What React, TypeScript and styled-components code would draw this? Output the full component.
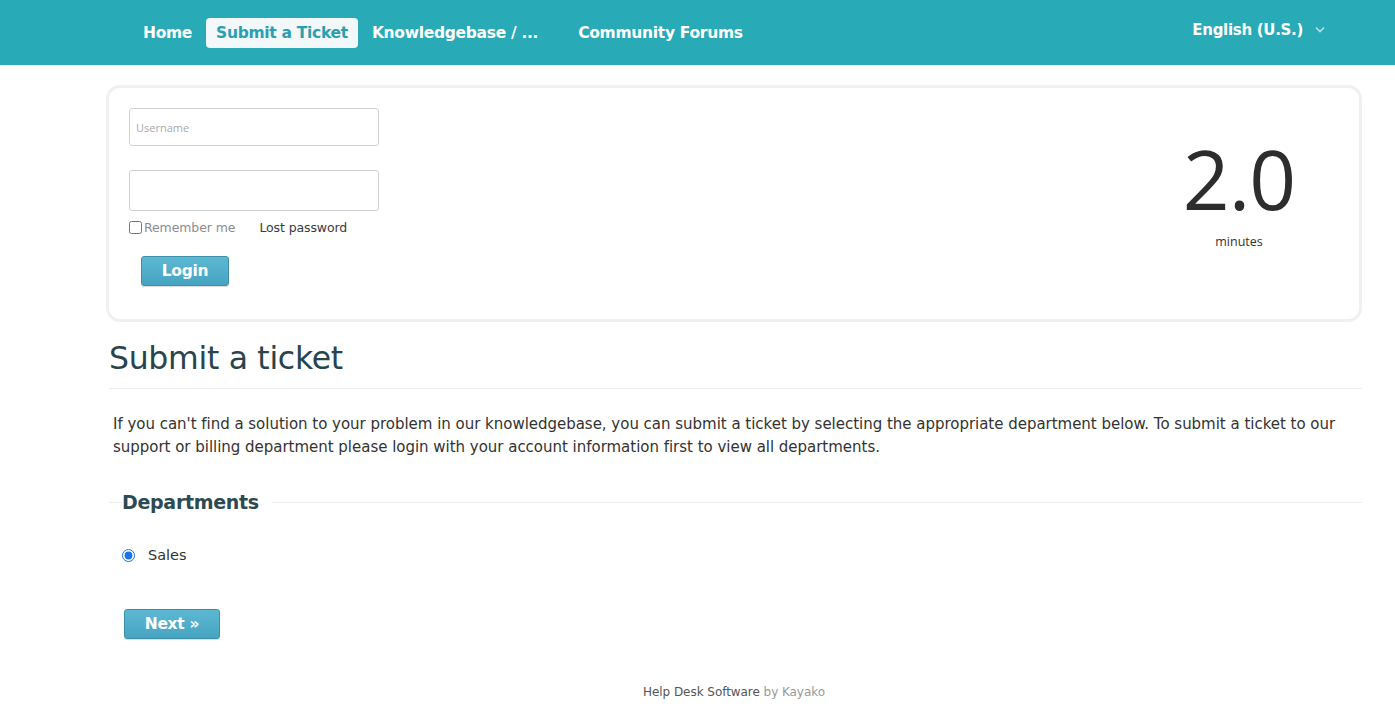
import styled, { createGlobalStyle } from "styled-components";

const GlobalStyle = createGlobalStyle`
  html, body {
    margin: 0;
    padding: 0;
    background: #ffffff;
    font-family: "DejaVu Sans", "Noto Sans", sans-serif;
  }
`;

const TopBar = styled.header`
  height: 65px;
  background: #28aab7;
  display: flex;
  align-items: center;
  padding: 0 70px 0 143px;
  box-sizing: border-box;
`;

const Nav = styled.nav`
  display: flex;
  align-items: center;
  gap: 4px;
  flex: 1;
`;

const NavLink = styled.a<{ active?: boolean; gapAfter?: number }>`
  display: inline-flex;
  align-items: center;
  height: 30px;
  padding: 0 10px;
  margin-right: ${({ gapAfter }) => gapAfter ?? 0}px;
  border-radius: 4px;
  font-size: 15.5px;
  font-weight: 700;
  letter-spacing: -0.3px;
  color: ${({ active }) => (active ? "#2a9fb0" : "#ffffff")};
  background: ${({ active }) => (active ? "#f3f8fa" : "transparent")};
  text-decoration: none;
  &:first-child {
    padding-left: 0;
  }
`;

const Lang = styled.div`
  display: flex;
  align-items: center;
  gap: 12px;
  color: #ffffff;
  font-size: 15px;
  font-weight: 700;
  letter-spacing: -0.3px;
  margin-top: -6px;
`;

const Page = styled.main`
  margin: 20px 33px 0 106px;
`;

const LoginCard = styled.section`
  border: 3px solid #eef0f2;
  border-radius: 14px;
  height: 237px;
  box-sizing: border-box;
  display: flex;
  justify-content: space-between;
  padding: 20px 0 0 20px;
`;

const LoginForm = styled.form`
  width: 250px;
  display: flex;
  flex-direction: column;
`;

const Field = styled.input<{ tall?: boolean }>`
  width: 250px;
  height: ${({ tall }) => (tall ? 41 : 38)}px;
  box-sizing: border-box;
  border: 1px solid #cfd2d4;
  border-radius: 3px;
  padding: 0 6px;
  font-family: "Open Sans", sans-serif;
  font-size: 11px;
  margin-bottom: ${({ tall }) => (tall ? 6 : 24)}px;
  &::placeholder {
    color: #a9a9a9;
  }
`;

const OptionsRow = styled.div`
  display: flex;
  align-items: center;
  margin-top: 3px;
  font-size: 12.5px;
  letter-spacing: -0.1px;
`;

const Check = styled.input`
  margin: 0 2px 0 0;
  width: 13px;
  height: 13px;
`;

const Muted = styled.span`
  color: #8c8c8c;
  margin-right: 24px;
`;

const Dark = styled.span`
  color: #3a3a3a;
`;

const TealButton = styled.button<{ w: number }>`
  width: ${({ w }) => w}px;
  height: 30px;
  border: 1px solid #3b8fa8;
  border-radius: 3px;
  background: linear-gradient(#5cb8d2, #47a4c1);
  color: #ffffff;
  font-family: "DejaVu Sans", sans-serif;
  font-size: 15.5px;
  font-weight: 700;
  letter-spacing: -0.3px;
  cursor: pointer;
  box-shadow: 0 1px 1px rgba(0, 0, 0, 0.15);
`;

const LoginWrap = styled.div`
  margin: 21px 0 0 12px;
`;

const Timer = styled.div`
  width: 244px;
  display: flex;
  flex-direction: column;
  align-items: center;
  margin-top: 28px;
  font-family: "Open Sans", sans-serif;
  color: #2d2d2f;
`;

const BigNumber = styled.div`
  font-size: 82px;
  line-height: 1;
  letter-spacing: -1px;
  margin-left: 4px;
  margin-top: 1px;
`;

const Unit = styled.div`
  font-size: 12.5px;
  margin-top: 14px;
  margin-left: 4px;
  color: #333;
`;

const Title = styled.h1`
  margin: 18px 0 0 3px;
  padding-bottom: 12px;
  border-bottom: 1px solid #eceeef;
  font-size: 31.5px;
  font-weight: 500;
  letter-spacing: -0.3px;
  color: #28444c;
`;

const Intro = styled.p`
  margin: 24px 0 0 7px;
  font-size: 15px;
  line-height: 23px;
  letter-spacing: -0.02px;
  color: #333;
`;

const Fieldset = styled.fieldset`
  border: none;
  border-top: 1px solid #eceeef;
  margin: 32px 0 0 3px;
  padding: 0 0 0 13px;
`;

const Legend = styled.legend`
  padding: 0 13px 0 0;
  font-size: 19px;
  font-weight: 700;
  letter-spacing: -0.3px;
  color: #2d4a52;
`;

const RadioRow = styled.label`
  display: flex;
  align-items: center;
  gap: 13px;
  margin-top: 34px;
  font-size: 14.5px;
  color: #333;
`;

const Radio = styled.input`
  margin: 0;
  width: 13px;
  height: 13px;
  accent-color: #1a73e8;
`;

const NextWrap = styled.div`
  margin: 46px 0 0 2px;
`;

const Footer = styled.footer`
  text-align: center;
  margin-top: 46px;
  font-size: 12px;
  color: #555;
  letter-spacing: -0.05px;
`;

const Faint = styled.span`
  color: #999;
`;

const Chevron = () => (
  <svg width="10" height="7" viewBox="0 0 10 7" fill="none">
    <path d="M1 1.5l4 4 4-4" stroke="#b9e2e7" strokeWidth="1.6" />
  </svg>
);

export default function App() {
  return (
    <>
      <GlobalStyle />
      <TopBar>
        <Nav>
          <NavLink href="#">Home</NavLink>
          <NavLink href="#" active>
            Submit a Ticket
          </NavLink>
          <NavLink href="#" gapAfter={16}>
            Knowledgebase / ...
          </NavLink>
          <NavLink href="#">Community Forums</NavLink>
        </Nav>
        <Lang>
          English (U.S.)
          <Chevron />
        </Lang>
      </TopBar>
      <Page>
        <LoginCard>
          <LoginForm>
            <Field placeholder="Username" />
            <Field type="password" tall />
            <OptionsRow>
              <Check type="checkbox" />
              <Muted>Remember me</Muted>
              <Dark>Lost password</Dark>
            </OptionsRow>
            <LoginWrap>
              <TealButton type="button" w={88}>
                Login
              </TealButton>
            </LoginWrap>
          </LoginForm>
          <Timer>
            <BigNumber>2.0</BigNumber>
            <Unit>minutes</Unit>
          </Timer>
        </LoginCard>
        <Title>Submit a ticket</Title>
        <Intro>
          If you can't find a solution to your problem in our knowledgebase, you can submit a
          ticket by selecting the appropriate department below. To submit a ticket to our support
          or billing department please login with your account information first to view all
          departments.
        </Intro>
        <Fieldset>
          <Legend>Departments</Legend>
          <RadioRow>
            <Radio type="radio" name="dept" defaultChecked />
            Sales
          </RadioRow>
          <NextWrap>
            <TealButton type="button" w={96}>
              Next »
            </TealButton>
          </NextWrap>
        </Fieldset>
        <Footer>
          Help Desk Software <Faint>by Kayako</Faint>
        </Footer>
      </Page>
    </>
  );
}
